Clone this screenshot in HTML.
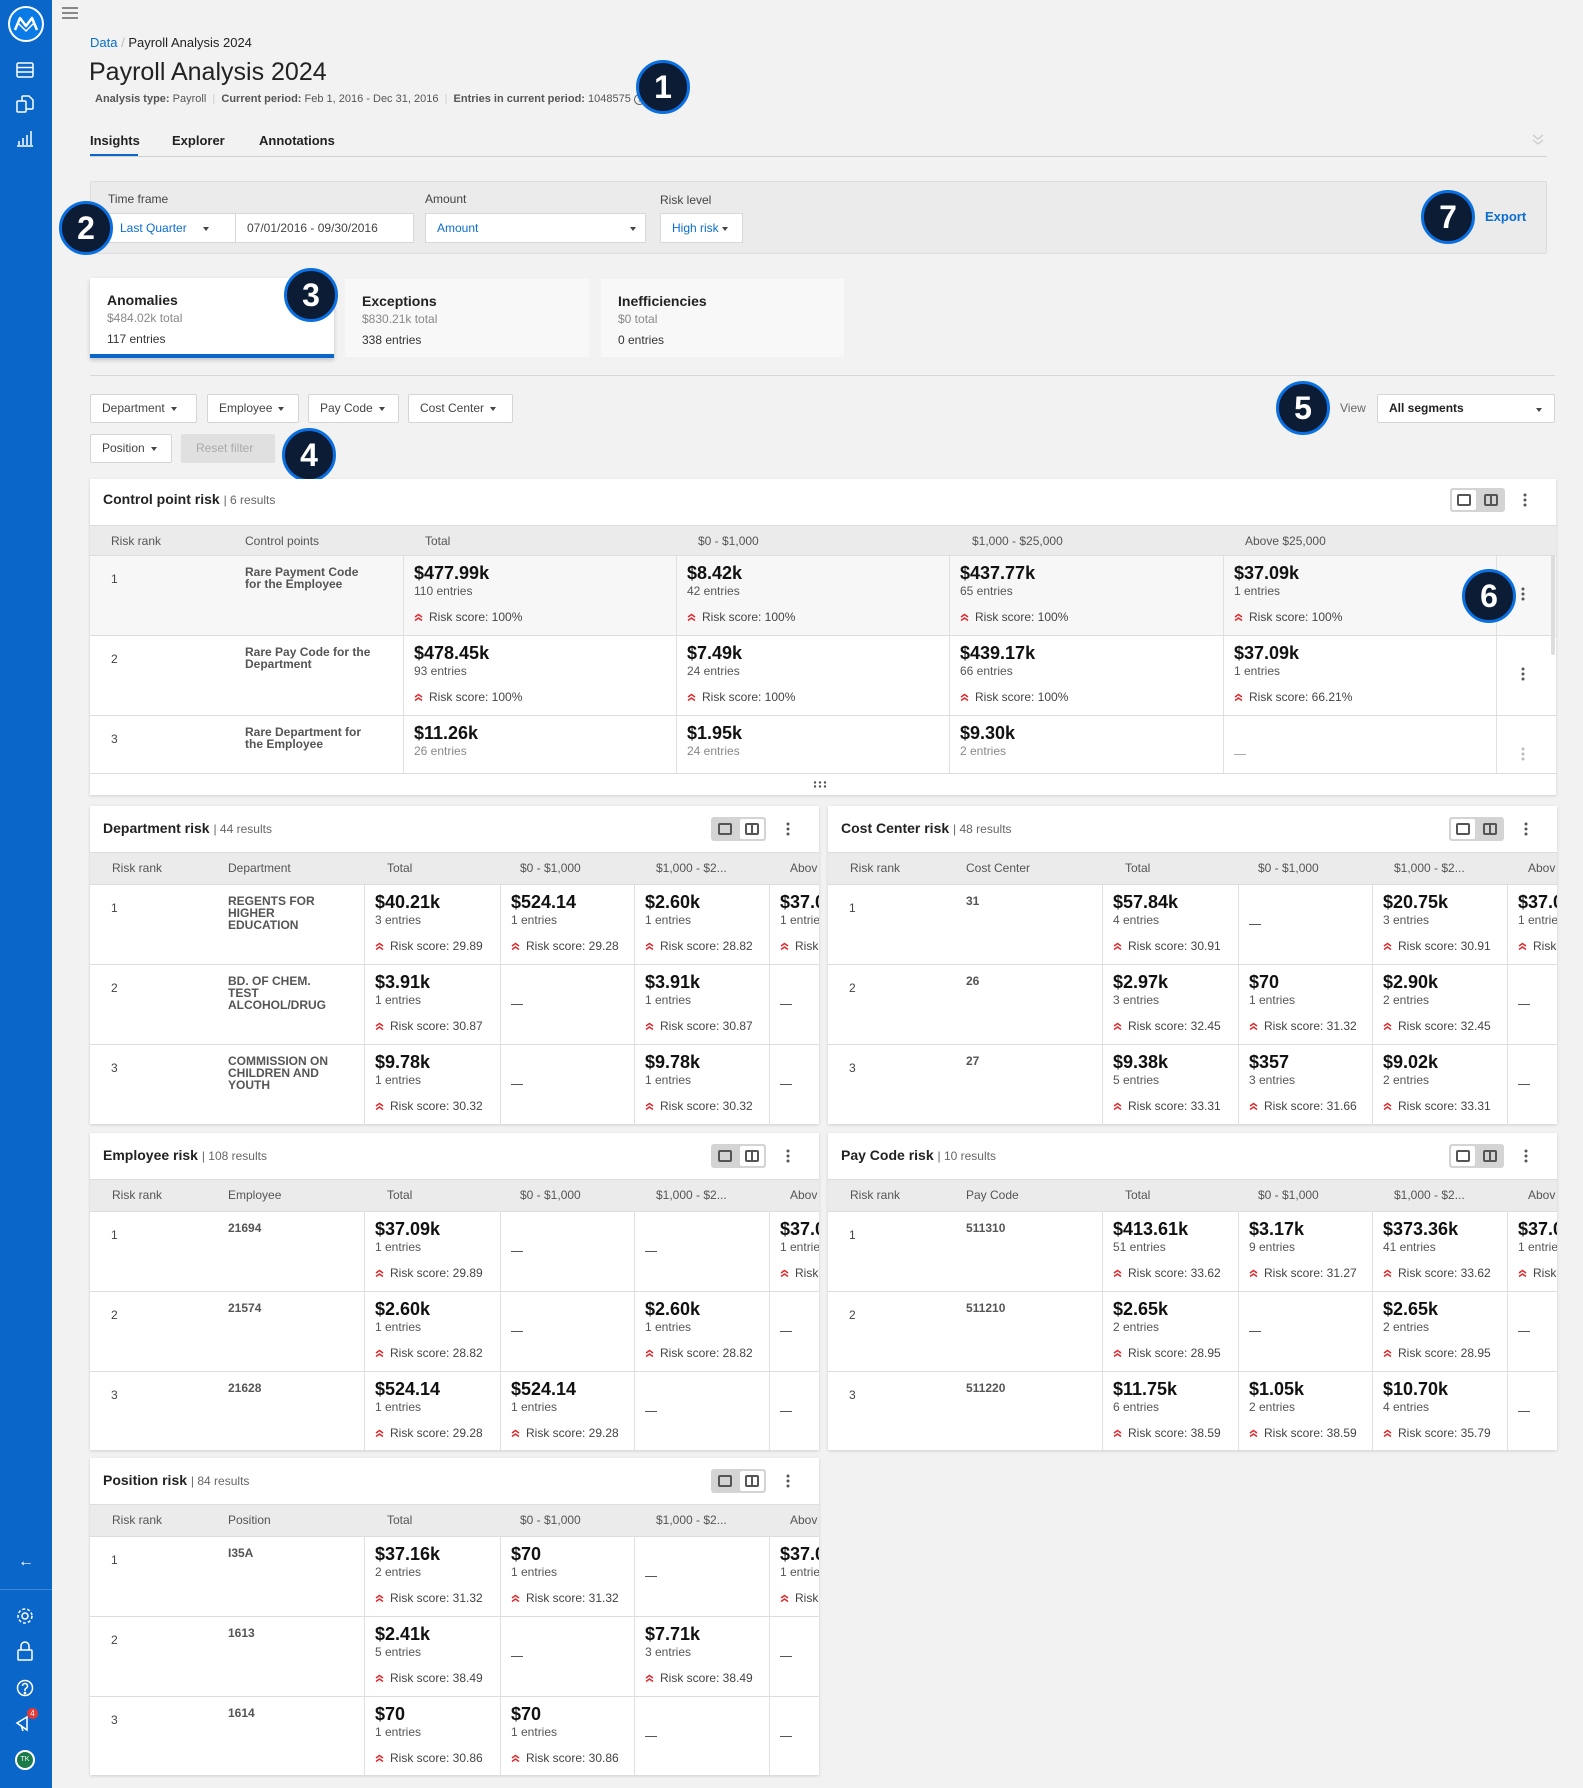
<!DOCTYPE html>
<html><head><meta charset="utf-8">
<style>
*{box-sizing:border-box}
body{margin:0;width:1583px;height:1788px;overflow:hidden;background:#f2f2f2;font-family:"Liberation Sans",Arial,sans-serif;color:#222;position:relative}
.a{position:absolute}
.sb{left:0;top:0;width:52px;height:1788px;background:#0a66c8}
.badge{position:absolute;width:54px;height:54px;border-radius:50%;background:#0c1c35;border:3px solid #0a6fe0;color:#fff;font-weight:bold;font-size:32px;text-align:center;line-height:48px}
.lbl{font-size:12px;color:#444}
.inp{position:absolute;background:#fff;border:1px solid #d8d8d8;height:30px;font-size:12px;line-height:28px;padding-left:11px}
.blue{color:#0a6ed1}
.car{display:inline-block;width:0;height:0;border-left:3px solid transparent;border-right:3px solid transparent;border-top:4px solid #444;vertical-align:middle;margin-left:6px}
.btn{position:absolute;background:#fff;border:1px solid #d5d5d5;border-radius:2px;height:29px;font-size:12px;color:#444;line-height:27px;padding-left:11px}
.kc{position:absolute;background:#fff;height:78px;padding:14px 0 0 17px}
.kc .t{font-size:14px;font-weight:bold;color:#222;line-height:16px}
.kc .g{font-size:12px;color:#888;line-height:16px;margin-top:2px}
.kc .n{font-size:12px;color:#333;line-height:16px;margin-top:5px}
.card{position:absolute;background:#fff;overflow:hidden;box-shadow:0 1px 3px rgba(0,0,0,.15)}
.ttl{position:absolute;left:13px;top:14px;font-size:14px;font-weight:bold;color:#222;white-space:nowrap}
.ttl span{font-weight:normal;font-size:12px;color:#666}
.hd{position:absolute;left:0;right:0;background:#ebebeb;border-top:1px solid #ddd;border-bottom:1px solid #ddd;font-size:12px;color:#555}
.hd span{position:absolute;top:8px;white-space:nowrap}
.r{position:absolute;left:0;right:0;height:80px;border-top:1px solid #ddd}
.rk{position:absolute;left:21px;top:16px;font-size:12px;color:#444}
.nm{position:absolute;top:10px;font-size:12px;font-weight:bold;color:#555;line-height:12px}
.c{position:absolute;top:0;bottom:0;border-left:1px solid #e0e0e0;padding:6px 0 0 10px;white-space:nowrap}
.v{font-size:18px;font-weight:bold;color:#111;line-height:22px}
.e{font-size:12px;color:#555;line-height:14px}
.s{font-size:12px;color:#444;margin-top:12px;line-height:14px}
.s svg{margin-right:6px;vertical-align:0}
.d{position:absolute;top:39px;left:10px;width:12px;height:1px;background:#555}
.tg{position:absolute;width:55px;height:24px;background:#d4d4d4;border-radius:3px}
.tg i{position:absolute;top:2px;width:24px;height:20px;border-radius:2px}
.tg i.on{background:#fff}
.tg b{position:absolute;left:5px;top:4px;width:14px;height:12px;border:2px solid #555;border-radius:2px}
.tg b.sp:after{content:"";position:absolute;left:4px;top:0;width:2px;height:8px;background:#555}
.kb{position:absolute}
.sm .c{width:136px}
</style></head><body>

<!-- sidebar -->
<div class="a sb"></div>
<svg class="a" style="left:7px;top:5px" width="38" height="38" viewBox="0 0 38 38"><circle cx="19" cy="19" r="17" fill="#0a7ae6" stroke="#fff" stroke-width="2"/><path d="M8 25 L13 13 L19 21 L25 13 L30 25" fill="none" stroke="#fff" stroke-width="2.5" stroke-linejoin="round"/><path d="M11 18 L19 26 L27 18" fill="none" stroke="#fff" stroke-width="1.5"/></svg>
<svg class="a" style="left:16px;top:62px" width="18" height="16" viewBox="0 0 18 16" fill="none" stroke="#fff" stroke-width="1.5"><rect x="1" y="1" width="16" height="14" rx="1.5"/><path d="M1 5.5H17M1 10H17"/></svg>
<svg class="a" style="left:16px;top:94px" width="18" height="20" viewBox="0 0 18 20" fill="none" stroke="#fff" stroke-width="1.5"><rect x="1" y="7" width="9" height="11" rx="1"/><path d="M6 7V3a1 1 0 0 1 1-1h6l4 4v8a1 1 0 0 1-1 1h-6"/></svg>
<svg class="a" style="left:16px;top:129px" width="18" height="18" viewBox="0 0 18 18" fill="none" stroke="#fff" stroke-width="1.5"><path d="M1 17H17M3 16V12M7 16V9M11 16V6M15 16V2"/></svg>
<div class="a" style="left:18px;top:1553px;color:#fff;font-size:16px">←</div>
<div class="a" style="left:0;top:1589px;width:52px;height:1px;background:#3d86d6"></div>
<svg class="a" style="left:16px;top:1607px" width="18" height="18" viewBox="0 0 18 18" fill="none" stroke="#fff" stroke-width="1.5"><circle cx="9" cy="9" r="3"/><circle cx="9" cy="9" r="7" stroke-dasharray="3 2"/></svg>
<svg class="a" style="left:16px;top:1641px" width="18" height="20" viewBox="0 0 18 20" fill="none" stroke="#fff" stroke-width="1.5"><rect x="2" y="9" width="14" height="10" rx="1"/><path d="M5 9V5a4 4 0 0 1 8 0v4"/></svg>
<svg class="a" style="left:16px;top:1679px" width="18" height="18" viewBox="0 0 18 18" fill="none" stroke="#fff" stroke-width="1.5"><circle cx="9" cy="9" r="7.5"/><path d="M6.5 7a2.5 2.5 0 1 1 3.5 2.3c-.7.3-1 .8-1 1.5V12"/><circle cx="9" cy="14" r=".6" fill="#fff"/></svg>
<svg class="a" style="left:15px;top:1713px" width="20" height="20" viewBox="0 0 20 20" fill="none" stroke="#fff" stroke-width="1.5"><path d="M2 10 L12 4 L12 17 Z M6 12 L8 18"/></svg>
<div class="a" style="left:27px;top:1708px;width:11px;height:11px;border-radius:50%;background:#e53935;color:#fff;font-size:8px;text-align:center;line-height:11px">4</div>
<div class="a" style="left:15px;top:1750px;width:20px;height:20px;border-radius:50%;background:#1b7a4a;border:2px solid #fff;color:#fff;font-size:7px;text-align:center;line-height:16px">TK</div>

<!-- hamburger -->
<svg class="a" style="left:62px;top:6px" width="16" height="14" viewBox="0 0 16 14" stroke="#666" stroke-width="1.5"><path d="M0 2H16M0 7H16M0 12H16"/></svg>

<!-- header -->
<div class="a" style="left:90px;top:35px;font-size:13px"><span class="blue">Data</span> <span style="color:#bbb">/</span> Payroll Analysis 2024</div>
<div class="a" style="left:89px;top:58px;font-size:25px;color:#222">Payroll Analysis 2024</div>
<div class="a" style="left:95px;top:93px;font-size:11px;color:#555;white-space:nowrap"><b>Analysis type:</b> Payroll <span style="color:#ccc">&nbsp;|&nbsp;</span> <b>Current period:</b> Feb 1, 2016 - Dec 31, 2016 <span style="color:#ccc">&nbsp;|&nbsp;</span> <b>Entries in current period:</b> 1048575 <span style="display:inline-block;width:11px;height:11px;border:1px solid #666;border-radius:50%;font-size:8px;text-align:center;line-height:9px">?</span></div>
<div class="badge" style="left:636px;top:60px">1</div>

<!-- tabs -->
<div class="a" style="left:90px;top:133px;font-size:13px;font-weight:bold">Insights</div>
<div class="a" style="left:172px;top:133px;font-size:13px;font-weight:bold">Explorer</div>
<div class="a" style="left:259px;top:133px;font-size:13px;font-weight:bold">Annotations</div>
<div class="a" style="left:90px;top:156px;width:1457px;height:1px;background:#d0d0d0"></div>
<div class="a" style="left:90px;top:154px;width:48px;height:2px;background:#0a66c8"></div>
<svg class="a" style="left:1532px;top:134px" width="12" height="12" viewBox="0 0 12 12" fill="none" stroke="#ccc" stroke-width="1.3"><path d="M1 1L6 5L11 1M1 6L6 10L11 6"/></svg>

<!-- filter panel -->
<div class="a" style="left:90px;top:181px;width:1457px;height:73px;background:#ebebeb;border:1px solid #ddd;border-radius:2px"></div>
<div class="a lbl" style="left:108px;top:192px">Time frame</div>
<div class="a lbl" style="left:425px;top:192px">Amount</div>
<div class="a lbl" style="left:660px;top:193px">Risk level</div>
<div class="inp blue" style="left:108px;top:213px;width:128px">Last Quarter<span class="car" style="margin-left:16px"></span></div>
<div class="inp" style="left:235px;top:213px;width:179px;color:#444">07/01/2016 - 09/30/2016</div>
<div class="inp blue" style="left:425px;top:213px;width:221px">Amount<span class="car" style="position:absolute;right:9px;top:13px"></span></div>
<div class="inp blue" style="left:660px;top:213px;width:83px">High risk<span class="car" style="margin-left:3px"></span></div>
<div class="badge" style="left:59px;top:201px">2</div>
<div class="badge" style="left:1421px;top:190px">7</div>
<div class="a blue" style="left:1485px;top:209px;font-size:13px;font-weight:bold">Export</div>

<!-- category cards -->
<div class="kc" style="left:90px;top:278px;width:244px;box-shadow:0 2px 4px rgba(0,0,0,.2);border-bottom:4px solid #0a66c8;height:80px"><div class="t">Anomalies</div><div class="g">$484.02k total</div><div class="n">117 entries</div></div>
<div class="kc" style="left:345px;top:279px;width:244px;background:#f8f8f8"><div class="t">Exceptions</div><div class="g">$830.21k total</div><div class="n">338 entries</div></div>
<div class="kc" style="left:601px;top:279px;width:243px;background:#f8f8f8"><div class="t">Inefficiencies</div><div class="g">$0 total</div><div class="n">0 entries</div></div>
<div class="badge" style="left:284px;top:268px">3</div>
<div class="a" style="left:90px;top:375px;width:1465px;height:1px;background:#d8d8d8"></div>

<!-- filter buttons -->
<div class="btn" style="left:90px;top:394px;width:107px">Department<span class="car"></span></div>
<div class="btn" style="left:207px;top:394px;width:92px">Employee<span class="car"></span></div>
<div class="btn" style="left:308px;top:394px;width:91px">Pay Code<span class="car"></span></div>
<div class="btn" style="left:408px;top:394px;width:105px">Cost Center<span class="car"></span></div>
<div class="btn" style="left:90px;top:434px;width:82px">Position<span class="car"></span></div>
<div class="btn" style="left:181px;top:434px;width:94px;background:#e0e0e0;border-color:#e0e0e0;color:#aaa;padding-left:14px">Reset filter</div>
<div class="badge" style="left:282px;top:428px">4</div>
<div class="badge" style="left:1276px;top:381px">5</div>
<div class="a" style="left:1340px;top:401px;font-size:12px;color:#666">View</div>
<div class="btn" style="left:1377px;top:394px;width:178px;color:#222;font-weight:bold">All segments<span class="car" style="position:absolute;right:12px;top:13px"></span></div>

<!-- control point risk -->
<div class="card" style="left:90px;top:479px;width:1466px;height:316px">
  <div class="ttl" style="top:12px">Control point risk <span>| 6 results</span></div>
  <div class="tg" style="left:1360px;top:9px"><i class="on" style="left:2px"><b></b></i><i style="left:29px"><b class="sp"></b></i></div>
  <svg class="kb" style="left:1432px;top:13px" width="6" height="16"><circle cx="3" cy="3" r="1.5" fill="#555"/><circle cx="3" cy="8" r="1.5" fill="#555"/><circle cx="3" cy="13" r="1.5" fill="#555"/></svg>
  <div class="hd" style="top:46px;height:31px"><span style="left:21px">Risk rank</span><span style="left:155px">Control points</span><span style="left:335px">Total</span><span style="left:608px">$0 - $1,000</span><span style="left:882px">$1,000 - $25,000</span><span style="left:1155px">Above $25,000</span></div>
  <div class="r" style="top:76px;background:#f7f7f7">
    <span class="rk">1</span><span class="nm" style="left:155px">Rare Payment Code<br>for the Employee</span>
    <div class="c" style="left:313px;width:273px"><div class="v">$477.99k</div><div class="e">110 entries</div><div class="s"><svg width="9" height="8" viewBox="0 0 9 8"><path d="M1 4L4.5 1.5L8 4M1 7.5L4.5 5L8 7.5" fill="none" stroke="#e0262a" stroke-width="1.5"/></svg>Risk score: 100%</div></div>
    <div class="c" style="left:586px;width:273px"><div class="v">$8.42k</div><div class="e">42 entries</div><div class="s"><svg width="9" height="8" viewBox="0 0 9 8"><path d="M1 4L4.5 1.5L8 4M1 7.5L4.5 5L8 7.5" fill="none" stroke="#e0262a" stroke-width="1.5"/></svg>Risk score: 100%</div></div>
    <div class="c" style="left:859px;width:274px"><div class="v">$437.77k</div><div class="e">65 entries</div><div class="s"><svg width="9" height="8" viewBox="0 0 9 8"><path d="M1 4L4.5 1.5L8 4M1 7.5L4.5 5L8 7.5" fill="none" stroke="#e0262a" stroke-width="1.5"/></svg>Risk score: 100%</div></div>
    <div class="c" style="left:1133px;width:273px"><div class="v">$37.09k</div><div class="e">1 entries</div><div class="s"><svg width="9" height="8" viewBox="0 0 9 8"><path d="M1 4L4.5 1.5L8 4M1 7.5L4.5 5L8 7.5" fill="none" stroke="#e0262a" stroke-width="1.5"/></svg>Risk score: 100%</div></div>
    <div class="c" style="left:1406px;width:60px"><svg style="position:absolute;left:23px;top:30px" width="6" height="16"><circle cx="3" cy="3" r="1.5" fill="#555"/><circle cx="3" cy="8" r="1.5" fill="#555"/><circle cx="3" cy="13" r="1.5" fill="#555"/></svg></div>
  </div>
  <div class="r" style="top:156px">
    <span class="rk">2</span><span class="nm" style="left:155px">Rare Pay Code for the<br>Department</span>
    <div class="c" style="left:313px;width:273px"><div class="v">$478.45k</div><div class="e">93 entries</div><div class="s"><svg width="9" height="8" viewBox="0 0 9 8"><path d="M1 4L4.5 1.5L8 4M1 7.5L4.5 5L8 7.5" fill="none" stroke="#e0262a" stroke-width="1.5"/></svg>Risk score: 100%</div></div>
    <div class="c" style="left:586px;width:273px"><div class="v">$7.49k</div><div class="e">24 entries</div><div class="s"><svg width="9" height="8" viewBox="0 0 9 8"><path d="M1 4L4.5 1.5L8 4M1 7.5L4.5 5L8 7.5" fill="none" stroke="#e0262a" stroke-width="1.5"/></svg>Risk score: 100%</div></div>
    <div class="c" style="left:859px;width:274px"><div class="v">$439.17k</div><div class="e">66 entries</div><div class="s"><svg width="9" height="8" viewBox="0 0 9 8"><path d="M1 4L4.5 1.5L8 4M1 7.5L4.5 5L8 7.5" fill="none" stroke="#e0262a" stroke-width="1.5"/></svg>Risk score: 100%</div></div>
    <div class="c" style="left:1133px;width:273px"><div class="v">$37.09k</div><div class="e">1 entries</div><div class="s"><svg width="9" height="8" viewBox="0 0 9 8"><path d="M1 4L4.5 1.5L8 4M1 7.5L4.5 5L8 7.5" fill="none" stroke="#e0262a" stroke-width="1.5"/></svg>Risk score: 66.21%</div></div>
    <div class="c" style="left:1406px;width:60px"><svg style="position:absolute;left:23px;top:30px" width="6" height="16"><circle cx="3" cy="3" r="1.5" fill="#555"/><circle cx="3" cy="8" r="1.5" fill="#555"/><circle cx="3" cy="13" r="1.5" fill="#555"/></svg></div>
  </div>
  <div class="r" style="top:236px">
    <span class="rk">3</span><span class="nm" style="left:155px">Rare Department for<br>the Employee</span>
    <div class="c" style="left:313px;width:273px"><div class="v">$11.26k</div><div class="e" style="color:#888">26 entries</div></div>
    <div class="c" style="left:586px;width:273px"><div class="v">$1.95k</div><div class="e" style="color:#888">24 entries</div></div>
    <div class="c" style="left:859px;width:274px"><div class="v">$9.30k</div><div class="e" style="color:#888">2 entries</div></div>
    <div class="c" style="left:1133px;width:273px"><div class="d" style="top:38px;background:#aaa"></div></div>
    <div class="c" style="left:1406px;width:60px"><svg style="position:absolute;left:23px;top:30px" width="6" height="16"><circle cx="3" cy="3" r="1.5" fill="#bbb"/><circle cx="3" cy="8" r="1.5" fill="#bbb"/><circle cx="3" cy="13" r="1.5" fill="#bbb"/></svg></div>
  </div>
  <div class="a" style="left:0;right:0;top:294px;height:22px;background:#fff;border-top:1px solid #ddd"></div>
  <svg class="a" style="left:723px;top:302px" width="14" height="7"><g fill="#555"><circle cx="2" cy="1.5" r="1.2"/><circle cx="7" cy="1.5" r="1.2"/><circle cx="12" cy="1.5" r="1.2"/><circle cx="2" cy="5.5" r="1.2"/><circle cx="7" cy="5.5" r="1.2"/><circle cx="12" cy="5.5" r="1.2"/></g></svg>
  <div class="a" style="left:1461px;top:76px;width:4px;height:100px;background:#ddd;border-radius:2px"></div>
</div>
<div class="badge" style="left:1462px;top:569px">6</div>

<!-- DEPARTMENT -->
<div class="card sm" style="left:90px;top:806px;width:729px;height:318px">
  <div class="ttl">Department risk <span>| 44 results</span></div>
  <div class="tg" style="left:621px;top:11px"><i style="left:2px"><b></b></i><i class="on" style="left:29px"><b class="sp"></b></i></div>
  <svg class="kb" style="left:695px;top:15px" width="6" height="16"><circle cx="3" cy="3" r="1.5" fill="#555"/><circle cx="3" cy="8" r="1.5" fill="#555"/><circle cx="3" cy="13" r="1.5" fill="#555"/></svg>
  <div class="hd" style="top:46px;height:33px"><span style="left:22px">Risk rank</span><span style="left:138px">Department</span><span style="left:297px">Total</span><span style="left:430px">$0 - $1,000</span><span style="left:566px">$1,000 - $2...</span><span style="left:700px">Abov</span></div>
  <div class="r" style="top:78px"><span class="rk">1</span><span class="nm" style="left:138px">REGENTS FOR<br>HIGHER<br>EDUCATION</span>
    <div class="c" style="left:274px"><div class="v">$40.21k</div><div class="e">3 entries</div><div class="s"><svg width="9" height="8" viewBox="0 0 9 8"><path d="M1 4L4.5 1.5L8 4M1 7.5L4.5 5L8 7.5" fill="none" stroke="#e0262a" stroke-width="1.5"/></svg>Risk score: 29.89</div></div>
    <div class="c" style="left:410px"><div class="v">$524.14</div><div class="e">1 entries</div><div class="s"><svg width="9" height="8" viewBox="0 0 9 8"><path d="M1 4L4.5 1.5L8 4M1 7.5L4.5 5L8 7.5" fill="none" stroke="#e0262a" stroke-width="1.5"/></svg>Risk score: 29.28</div></div>
    <div class="c" style="left:544px"><div class="v">$2.60k</div><div class="e">1 entries</div><div class="s"><svg width="9" height="8" viewBox="0 0 9 8"><path d="M1 4L4.5 1.5L8 4M1 7.5L4.5 5L8 7.5" fill="none" stroke="#e0262a" stroke-width="1.5"/></svg>Risk score: 28.82</div></div>
    <div class="c" style="left:679px"><div class="v">$37.09k</div><div class="e">1 entries</div><div class="s"><svg width="9" height="8" viewBox="0 0 9 8"><path d="M1 4L4.5 1.5L8 4M1 7.5L4.5 5L8 7.5" fill="none" stroke="#e0262a" stroke-width="1.5"/></svg>Risk score: 29.89</div></div></div>
  <div class="r" style="top:158px"><span class="rk">2</span><span class="nm" style="left:138px">BD. OF CHEM.<br>TEST<br>ALCOHOL/DRUG</span>
    <div class="c" style="left:274px"><div class="v">$3.91k</div><div class="e">1 entries</div><div class="s"><svg width="9" height="8" viewBox="0 0 9 8"><path d="M1 4L4.5 1.5L8 4M1 7.5L4.5 5L8 7.5" fill="none" stroke="#e0262a" stroke-width="1.5"/></svg>Risk score: 30.87</div></div>
    <div class="c" style="left:410px"><div class="d"></div></div>
    <div class="c" style="left:544px"><div class="v">$3.91k</div><div class="e">1 entries</div><div class="s"><svg width="9" height="8" viewBox="0 0 9 8"><path d="M1 4L4.5 1.5L8 4M1 7.5L4.5 5L8 7.5" fill="none" stroke="#e0262a" stroke-width="1.5"/></svg>Risk score: 30.87</div></div>
    <div class="c" style="left:679px"><div class="d"></div></div></div>
  <div class="r" style="top:238px"><span class="rk">3</span><span class="nm" style="left:138px">COMMISSION ON<br>CHILDREN AND<br>YOUTH</span>
    <div class="c" style="left:274px"><div class="v">$9.78k</div><div class="e">1 entries</div><div class="s"><svg width="9" height="8" viewBox="0 0 9 8"><path d="M1 4L4.5 1.5L8 4M1 7.5L4.5 5L8 7.5" fill="none" stroke="#e0262a" stroke-width="1.5"/></svg>Risk score: 30.32</div></div>
    <div class="c" style="left:410px"><div class="d"></div></div>
    <div class="c" style="left:544px"><div class="v">$9.78k</div><div class="e">1 entries</div><div class="s"><svg width="9" height="8" viewBox="0 0 9 8"><path d="M1 4L4.5 1.5L8 4M1 7.5L4.5 5L8 7.5" fill="none" stroke="#e0262a" stroke-width="1.5"/></svg>Risk score: 30.32</div></div>
    <div class="c" style="left:679px"><div class="d"></div></div></div>
</div>

<!-- COST CENTER -->
<div class="card sm" style="left:828px;top:806px;width:729px;height:318px">
  <div class="ttl">Cost Center risk <span>| 48 results</span></div>
  <div class="tg" style="left:621px;top:11px"><i class="on" style="left:2px"><b></b></i><i style="left:29px"><b class="sp"></b></i></div>
  <svg class="kb" style="left:695px;top:15px" width="6" height="16"><circle cx="3" cy="3" r="1.5" fill="#555"/><circle cx="3" cy="8" r="1.5" fill="#555"/><circle cx="3" cy="13" r="1.5" fill="#555"/></svg>
  <div class="hd" style="top:46px;height:33px"><span style="left:22px">Risk rank</span><span style="left:138px">Cost Center</span><span style="left:297px">Total</span><span style="left:430px">$0 - $1,000</span><span style="left:566px">$1,000 - $2...</span><span style="left:700px">Abov</span></div>
  <div class="r" style="top:78px"><span class="rk">1</span><span class="nm" style="left:138px">31</span>
    <div class="c" style="left:274px"><div class="v">$57.84k</div><div class="e">4 entries</div><div class="s"><svg width="9" height="8" viewBox="0 0 9 8"><path d="M1 4L4.5 1.5L8 4M1 7.5L4.5 5L8 7.5" fill="none" stroke="#e0262a" stroke-width="1.5"/></svg>Risk score: 30.91</div></div>
    <div class="c" style="left:410px"><div class="d"></div></div>
    <div class="c" style="left:544px"><div class="v">$20.75k</div><div class="e">3 entries</div><div class="s"><svg width="9" height="8" viewBox="0 0 9 8"><path d="M1 4L4.5 1.5L8 4M1 7.5L4.5 5L8 7.5" fill="none" stroke="#e0262a" stroke-width="1.5"/></svg>Risk score: 30.91</div></div>
    <div class="c" style="left:679px"><div class="v">$37.09k</div><div class="e">1 entries</div><div class="s"><svg width="9" height="8" viewBox="0 0 9 8"><path d="M1 4L4.5 1.5L8 4M1 7.5L4.5 5L8 7.5" fill="none" stroke="#e0262a" stroke-width="1.5"/></svg>Risk score: 30.91</div></div></div>
  <div class="r" style="top:158px"><span class="rk">2</span><span class="nm" style="left:138px">26</span>
    <div class="c" style="left:274px"><div class="v">$2.97k</div><div class="e">3 entries</div><div class="s"><svg width="9" height="8" viewBox="0 0 9 8"><path d="M1 4L4.5 1.5L8 4M1 7.5L4.5 5L8 7.5" fill="none" stroke="#e0262a" stroke-width="1.5"/></svg>Risk score: 32.45</div></div>
    <div class="c" style="left:410px"><div class="v">$70</div><div class="e">1 entries</div><div class="s"><svg width="9" height="8" viewBox="0 0 9 8"><path d="M1 4L4.5 1.5L8 4M1 7.5L4.5 5L8 7.5" fill="none" stroke="#e0262a" stroke-width="1.5"/></svg>Risk score: 31.32</div></div>
    <div class="c" style="left:544px"><div class="v">$2.90k</div><div class="e">2 entries</div><div class="s"><svg width="9" height="8" viewBox="0 0 9 8"><path d="M1 4L4.5 1.5L8 4M1 7.5L4.5 5L8 7.5" fill="none" stroke="#e0262a" stroke-width="1.5"/></svg>Risk score: 32.45</div></div>
    <div class="c" style="left:679px"><div class="d"></div></div></div>
  <div class="r" style="top:238px"><span class="rk">3</span><span class="nm" style="left:138px">27</span>
    <div class="c" style="left:274px"><div class="v">$9.38k</div><div class="e">5 entries</div><div class="s"><svg width="9" height="8" viewBox="0 0 9 8"><path d="M1 4L4.5 1.5L8 4M1 7.5L4.5 5L8 7.5" fill="none" stroke="#e0262a" stroke-width="1.5"/></svg>Risk score: 33.31</div></div>
    <div class="c" style="left:410px"><div class="v">$357</div><div class="e">3 entries</div><div class="s"><svg width="9" height="8" viewBox="0 0 9 8"><path d="M1 4L4.5 1.5L8 4M1 7.5L4.5 5L8 7.5" fill="none" stroke="#e0262a" stroke-width="1.5"/></svg>Risk score: 31.66</div></div>
    <div class="c" style="left:544px"><div class="v">$9.02k</div><div class="e">2 entries</div><div class="s"><svg width="9" height="8" viewBox="0 0 9 8"><path d="M1 4L4.5 1.5L8 4M1 7.5L4.5 5L8 7.5" fill="none" stroke="#e0262a" stroke-width="1.5"/></svg>Risk score: 33.31</div></div>
    <div class="c" style="left:679px"><div class="d"></div></div></div>
</div>

<!-- EMPLOYEE -->
<div class="card sm" style="left:90px;top:1133px;width:729px;height:317px">
  <div class="ttl">Employee risk <span>| 108 results</span></div>
  <div class="tg" style="left:621px;top:11px"><i style="left:2px"><b></b></i><i class="on" style="left:29px"><b class="sp"></b></i></div>
  <svg class="kb" style="left:695px;top:15px" width="6" height="16"><circle cx="3" cy="3" r="1.5" fill="#555"/><circle cx="3" cy="8" r="1.5" fill="#555"/><circle cx="3" cy="13" r="1.5" fill="#555"/></svg>
  <div class="hd" style="top:46px;height:33px"><span style="left:22px">Risk rank</span><span style="left:138px">Employee</span><span style="left:297px">Total</span><span style="left:430px">$0 - $1,000</span><span style="left:566px">$1,000 - $2...</span><span style="left:700px">Abov</span></div>
  <div class="r" style="top:78px"><span class="rk">1</span><span class="nm" style="left:138px">21694</span>
    <div class="c" style="left:274px"><div class="v">$37.09k</div><div class="e">1 entries</div><div class="s"><svg width="9" height="8" viewBox="0 0 9 8"><path d="M1 4L4.5 1.5L8 4M1 7.5L4.5 5L8 7.5" fill="none" stroke="#e0262a" stroke-width="1.5"/></svg>Risk score: 29.89</div></div>
    <div class="c" style="left:410px"><div class="d"></div></div>
    <div class="c" style="left:544px"><div class="d"></div></div>
    <div class="c" style="left:679px"><div class="v">$37.09k</div><div class="e">1 entries</div><div class="s"><svg width="9" height="8" viewBox="0 0 9 8"><path d="M1 4L4.5 1.5L8 4M1 7.5L4.5 5L8 7.5" fill="none" stroke="#e0262a" stroke-width="1.5"/></svg>Risk score: 29.89</div></div></div>
  <div class="r" style="top:158px"><span class="rk">2</span><span class="nm" style="left:138px">21574</span>
    <div class="c" style="left:274px"><div class="v">$2.60k</div><div class="e">1 entries</div><div class="s"><svg width="9" height="8" viewBox="0 0 9 8"><path d="M1 4L4.5 1.5L8 4M1 7.5L4.5 5L8 7.5" fill="none" stroke="#e0262a" stroke-width="1.5"/></svg>Risk score: 28.82</div></div>
    <div class="c" style="left:410px"><div class="d"></div></div>
    <div class="c" style="left:544px"><div class="v">$2.60k</div><div class="e">1 entries</div><div class="s"><svg width="9" height="8" viewBox="0 0 9 8"><path d="M1 4L4.5 1.5L8 4M1 7.5L4.5 5L8 7.5" fill="none" stroke="#e0262a" stroke-width="1.5"/></svg>Risk score: 28.82</div></div>
    <div class="c" style="left:679px"><div class="d"></div></div></div>
  <div class="r" style="top:238px"><span class="rk">3</span><span class="nm" style="left:138px">21628</span>
    <div class="c" style="left:274px"><div class="v">$524.14</div><div class="e">1 entries</div><div class="s"><svg width="9" height="8" viewBox="0 0 9 8"><path d="M1 4L4.5 1.5L8 4M1 7.5L4.5 5L8 7.5" fill="none" stroke="#e0262a" stroke-width="1.5"/></svg>Risk score: 29.28</div></div>
    <div class="c" style="left:410px"><div class="v">$524.14</div><div class="e">1 entries</div><div class="s"><svg width="9" height="8" viewBox="0 0 9 8"><path d="M1 4L4.5 1.5L8 4M1 7.5L4.5 5L8 7.5" fill="none" stroke="#e0262a" stroke-width="1.5"/></svg>Risk score: 29.28</div></div>
    <div class="c" style="left:544px"><div class="d"></div></div>
    <div class="c" style="left:679px"><div class="d"></div></div></div>
</div>

<!-- PAY CODE -->
<div class="card sm" style="left:828px;top:1133px;width:729px;height:317px">
  <div class="ttl">Pay Code risk <span>| 10 results</span></div>
  <div class="tg" style="left:621px;top:11px"><i class="on" style="left:2px"><b></b></i><i style="left:29px"><b class="sp"></b></i></div>
  <svg class="kb" style="left:695px;top:15px" width="6" height="16"><circle cx="3" cy="3" r="1.5" fill="#555"/><circle cx="3" cy="8" r="1.5" fill="#555"/><circle cx="3" cy="13" r="1.5" fill="#555"/></svg>
  <div class="hd" style="top:46px;height:33px"><span style="left:22px">Risk rank</span><span style="left:138px">Pay Code</span><span style="left:297px">Total</span><span style="left:430px">$0 - $1,000</span><span style="left:566px">$1,000 - $2...</span><span style="left:700px">Abov</span></div>
  <div class="r" style="top:78px"><span class="rk">1</span><span class="nm" style="left:138px">511310</span>
    <div class="c" style="left:274px"><div class="v">$413.61k</div><div class="e">51 entries</div><div class="s"><svg width="9" height="8" viewBox="0 0 9 8"><path d="M1 4L4.5 1.5L8 4M1 7.5L4.5 5L8 7.5" fill="none" stroke="#e0262a" stroke-width="1.5"/></svg>Risk score: 33.62</div></div>
    <div class="c" style="left:410px"><div class="v">$3.17k</div><div class="e">9 entries</div><div class="s"><svg width="9" height="8" viewBox="0 0 9 8"><path d="M1 4L4.5 1.5L8 4M1 7.5L4.5 5L8 7.5" fill="none" stroke="#e0262a" stroke-width="1.5"/></svg>Risk score: 31.27</div></div>
    <div class="c" style="left:544px"><div class="v">$373.36k</div><div class="e">41 entries</div><div class="s"><svg width="9" height="8" viewBox="0 0 9 8"><path d="M1 4L4.5 1.5L8 4M1 7.5L4.5 5L8 7.5" fill="none" stroke="#e0262a" stroke-width="1.5"/></svg>Risk score: 33.62</div></div>
    <div class="c" style="left:679px"><div class="v">$37.09k</div><div class="e">1 entries</div><div class="s"><svg width="9" height="8" viewBox="0 0 9 8"><path d="M1 4L4.5 1.5L8 4M1 7.5L4.5 5L8 7.5" fill="none" stroke="#e0262a" stroke-width="1.5"/></svg>Risk score: 33.62</div></div></div>
  <div class="r" style="top:158px"><span class="rk">2</span><span class="nm" style="left:138px">511210</span>
    <div class="c" style="left:274px"><div class="v">$2.65k</div><div class="e">2 entries</div><div class="s"><svg width="9" height="8" viewBox="0 0 9 8"><path d="M1 4L4.5 1.5L8 4M1 7.5L4.5 5L8 7.5" fill="none" stroke="#e0262a" stroke-width="1.5"/></svg>Risk score: 28.95</div></div>
    <div class="c" style="left:410px"><div class="d"></div></div>
    <div class="c" style="left:544px"><div class="v">$2.65k</div><div class="e">2 entries</div><div class="s"><svg width="9" height="8" viewBox="0 0 9 8"><path d="M1 4L4.5 1.5L8 4M1 7.5L4.5 5L8 7.5" fill="none" stroke="#e0262a" stroke-width="1.5"/></svg>Risk score: 28.95</div></div>
    <div class="c" style="left:679px"><div class="d"></div></div></div>
  <div class="r" style="top:238px"><span class="rk">3</span><span class="nm" style="left:138px">511220</span>
    <div class="c" style="left:274px"><div class="v">$11.75k</div><div class="e">6 entries</div><div class="s"><svg width="9" height="8" viewBox="0 0 9 8"><path d="M1 4L4.5 1.5L8 4M1 7.5L4.5 5L8 7.5" fill="none" stroke="#e0262a" stroke-width="1.5"/></svg>Risk score: 38.59</div></div>
    <div class="c" style="left:410px"><div class="v">$1.05k</div><div class="e">2 entries</div><div class="s"><svg width="9" height="8" viewBox="0 0 9 8"><path d="M1 4L4.5 1.5L8 4M1 7.5L4.5 5L8 7.5" fill="none" stroke="#e0262a" stroke-width="1.5"/></svg>Risk score: 38.59</div></div>
    <div class="c" style="left:544px"><div class="v">$10.70k</div><div class="e">4 entries</div><div class="s"><svg width="9" height="8" viewBox="0 0 9 8"><path d="M1 4L4.5 1.5L8 4M1 7.5L4.5 5L8 7.5" fill="none" stroke="#e0262a" stroke-width="1.5"/></svg>Risk score: 35.79</div></div>
    <div class="c" style="left:679px"><div class="d"></div></div></div>
</div>

<!-- POSITION -->
<div class="card sm" style="left:90px;top:1458px;width:729px;height:317px">
  <div class="ttl">Position risk <span>| 84 results</span></div>
  <div class="tg" style="left:621px;top:11px"><i style="left:2px"><b></b></i><i class="on" style="left:29px"><b class="sp"></b></i></div>
  <svg class="kb" style="left:695px;top:15px" width="6" height="16"><circle cx="3" cy="3" r="1.5" fill="#555"/><circle cx="3" cy="8" r="1.5" fill="#555"/><circle cx="3" cy="13" r="1.5" fill="#555"/></svg>
  <div class="hd" style="top:46px;height:33px"><span style="left:22px">Risk rank</span><span style="left:138px">Position</span><span style="left:297px">Total</span><span style="left:430px">$0 - $1,000</span><span style="left:566px">$1,000 - $2...</span><span style="left:700px">Abov</span></div>
  <div class="r" style="top:78px"><span class="rk">1</span><span class="nm" style="left:138px">I35A</span>
    <div class="c" style="left:274px"><div class="v">$37.16k</div><div class="e">2 entries</div><div class="s"><svg width="9" height="8" viewBox="0 0 9 8"><path d="M1 4L4.5 1.5L8 4M1 7.5L4.5 5L8 7.5" fill="none" stroke="#e0262a" stroke-width="1.5"/></svg>Risk score: 31.32</div></div>
    <div class="c" style="left:410px"><div class="v">$70</div><div class="e">1 entries</div><div class="s"><svg width="9" height="8" viewBox="0 0 9 8"><path d="M1 4L4.5 1.5L8 4M1 7.5L4.5 5L8 7.5" fill="none" stroke="#e0262a" stroke-width="1.5"/></svg>Risk score: 31.32</div></div>
    <div class="c" style="left:544px"><div class="d"></div></div>
    <div class="c" style="left:679px"><div class="v">$37.09k</div><div class="e">1 entries</div><div class="s"><svg width="9" height="8" viewBox="0 0 9 8"><path d="M1 4L4.5 1.5L8 4M1 7.5L4.5 5L8 7.5" fill="none" stroke="#e0262a" stroke-width="1.5"/></svg>Risk score: 31.32</div></div></div>
  <div class="r" style="top:158px"><span class="rk">2</span><span class="nm" style="left:138px">1613</span>
    <div class="c" style="left:274px"><div class="v">$2.41k</div><div class="e">5 entries</div><div class="s"><svg width="9" height="8" viewBox="0 0 9 8"><path d="M1 4L4.5 1.5L8 4M1 7.5L4.5 5L8 7.5" fill="none" stroke="#e0262a" stroke-width="1.5"/></svg>Risk score: 38.49</div></div>
    <div class="c" style="left:410px"><div class="d"></div></div>
    <div class="c" style="left:544px"><div class="v">$7.71k</div><div class="e">3 entries</div><div class="s"><svg width="9" height="8" viewBox="0 0 9 8"><path d="M1 4L4.5 1.5L8 4M1 7.5L4.5 5L8 7.5" fill="none" stroke="#e0262a" stroke-width="1.5"/></svg>Risk score: 38.49</div></div>
    <div class="c" style="left:679px"><div class="d"></div></div></div>
  <div class="r" style="top:238px"><span class="rk">3</span><span class="nm" style="left:138px">1614</span>
    <div class="c" style="left:274px"><div class="v">$70</div><div class="e">1 entries</div><div class="s"><svg width="9" height="8" viewBox="0 0 9 8"><path d="M1 4L4.5 1.5L8 4M1 7.5L4.5 5L8 7.5" fill="none" stroke="#e0262a" stroke-width="1.5"/></svg>Risk score: 30.86</div></div>
    <div class="c" style="left:410px"><div class="v">$70</div><div class="e">1 entries</div><div class="s"><svg width="9" height="8" viewBox="0 0 9 8"><path d="M1 4L4.5 1.5L8 4M1 7.5L4.5 5L8 7.5" fill="none" stroke="#e0262a" stroke-width="1.5"/></svg>Risk score: 30.86</div></div>
    <div class="c" style="left:544px"><div class="d"></div></div>
    <div class="c" style="left:679px"><div class="d"></div></div></div>
</div>

</body></html>
